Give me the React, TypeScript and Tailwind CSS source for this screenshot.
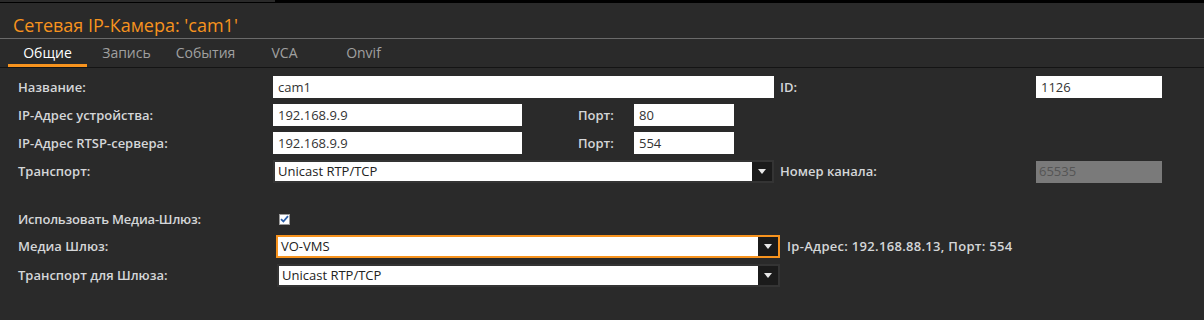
import React from "react";

const LABEL = "text-[13px] font-semibold text-[#d4d6d8] leading-none";
const FIELD = "h-[22px] bg-white text-[13px] text-[#333] px-[5px] flex items-center leading-none";

function TextField({ value, className }: { value: string; className: string }) {
    return <div className={`${FIELD} ${className}`}>{value}</div>;
}

function Select({ value, className, focused }: { value: string; className: string; focused?: boolean }) {
    return (
        <div
            className={`flex h-[23px] ${focused ? "border-2 border-[#f7931e]" : "border-2 border-[#343434]"} ${className}`}
        >
            <div className="flex-1 bg-white text-[13px] text-[#222] px-[3px] flex items-center leading-none">
                {value}
            </div>
            <div className="w-[20px] bg-[#1b1b1b] flex items-center justify-center">
                <svg width="8" height="5" viewBox="0 0 8 5">
                    <path d="M0 0 L8 0 L4 5 Z" fill="#e8e8e8" />
                </svg>
            </div>
        </div>
    );
}

export default function App() {
    const tabs = ["Общие", "Запись", "События", "VCA", "Onvif"];

    return (
        <div
            className="w-[1204px] h-[320px] bg-[#2a2a2a] overflow-hidden"
            style={{ fontFamily: '"Open Sans", "Noto Sans", sans-serif' }}
        >
            {/* top strip */}
            <div className="flex h-[3px] bg-black">
                <div className="w-[275px] h-[2px] bg-[#2a2a2a]" />
            </div>

            {/* title */}
            <div className="h-[35px] pl-[13px] flex items-end pb-[4px]">
                <h1 className="text-[18px] leading-none text-[#f7931e]">Сетевая IP-Камера: 'cam1'</h1>
            </div>
            <div className="h-px bg-[#6a6a6a]" />

            {/* tabs */}
            <div className="flex pl-[8px] h-[29px] border-b border-[#141414]">
                {tabs.map((t, i) => (
                    <div
                        key={t}
                        className={`w-[79px] flex items-center justify-center text-[14px] leading-none ${
                            i === 0 ? "text-white border-b-[3px] border-[#f7931e] pt-[3px]" : "text-[#a0a0a0]"
                        }`}
                    >
                        {t}
                    </div>
                ))}
            </div>

            {/* form */}
            <div className="pl-[18px] pt-[8px] flex flex-col">
                <div className="flex items-center h-[22px]">
                    <span className={`${LABEL} w-[255px]`}>Название:</span>
                    <TextField value="cam1" className="w-[501px]" />
                    <span className={`${LABEL} ml-[6px] w-[256px]`}>ID:</span>
                    <TextField value="1126" className="w-[126px]" />
                </div>
                <div className="flex items-center h-[22px] mt-[6px]">
                    <span className={`${LABEL} w-[255px]`}>IP-Адрес устройства:</span>
                    <TextField value="192.168.9.9" className="w-[249px]" />
                    <span className={`${LABEL} ml-[56px] w-[56px]`}>Порт:</span>
                    <TextField value="80" className="w-[100px]" />
                </div>
                <div className="flex items-center h-[22px] mt-[6px]">
                    <span className={`${LABEL} w-[255px]`}>IP-Адрес RTSP-сервера:</span>
                    <TextField value="192.168.9.9" className="w-[249px]" />
                    <span className={`${LABEL} ml-[56px] w-[56px]`}>Порт:</span>
                    <TextField value="554" className="w-[100px]" />
                </div>
                <div className="flex items-center h-[23px] mt-[6px]">
                    <span className={`${LABEL} w-[255px]`}>Транспорт:</span>
                    <Select value="Unicast RTP/TCP" className="w-[501px]" />
                    <span className={`${LABEL} ml-[6px] w-[256px]`}>Номер канала:</span>
                    <div className="h-[22px] w-[126px] bg-[#7a7a7a] text-[13px] text-[#555] px-[3px] flex items-center leading-none">
                        65535
                    </div>
                </div>

                <div className="flex items-center h-[22px] mt-[25px]">
                    <span className={`${LABEL} w-[261px] tracking-[-0.2px]`}>Использовать Медиа-Шлюз:</span>
                    <div className="w-[11px] h-[11px] bg-white border border-[#9a9a9a] flex items-center justify-center">
                        <svg width="9" height="8" viewBox="0 0 9 8">
                            <path d="M1 4.2 L3.4 6.5 L8 1.2" stroke="#2c5fa8" strokeWidth="1.8" fill="none" />
                        </svg>
                    </div>
                </div>
                <div className="flex items-center h-[23px] mt-[5px]">
                    <span className={`${LABEL} w-[258px]`}>Медиа Шлюз:</span>
                    <Select value="VO-VMS" className="w-[504px]" focused />
                    <span className={`${LABEL} ml-[7px] text-[13.5px] tracking-[0.3px]`}>
                        Ip-Адрес: 192.168.88.13, Порт: 554
                    </span>
                </div>
                <div className="flex items-center h-[23px] mt-[6px]">
                    <span className={`${LABEL} w-[259px]`}>Транспорт для Шлюза:</span>
                    <Select value="Unicast RTP/TCP" className="w-[503px]" />
                </div>
            </div>
        </div>
    );
}
